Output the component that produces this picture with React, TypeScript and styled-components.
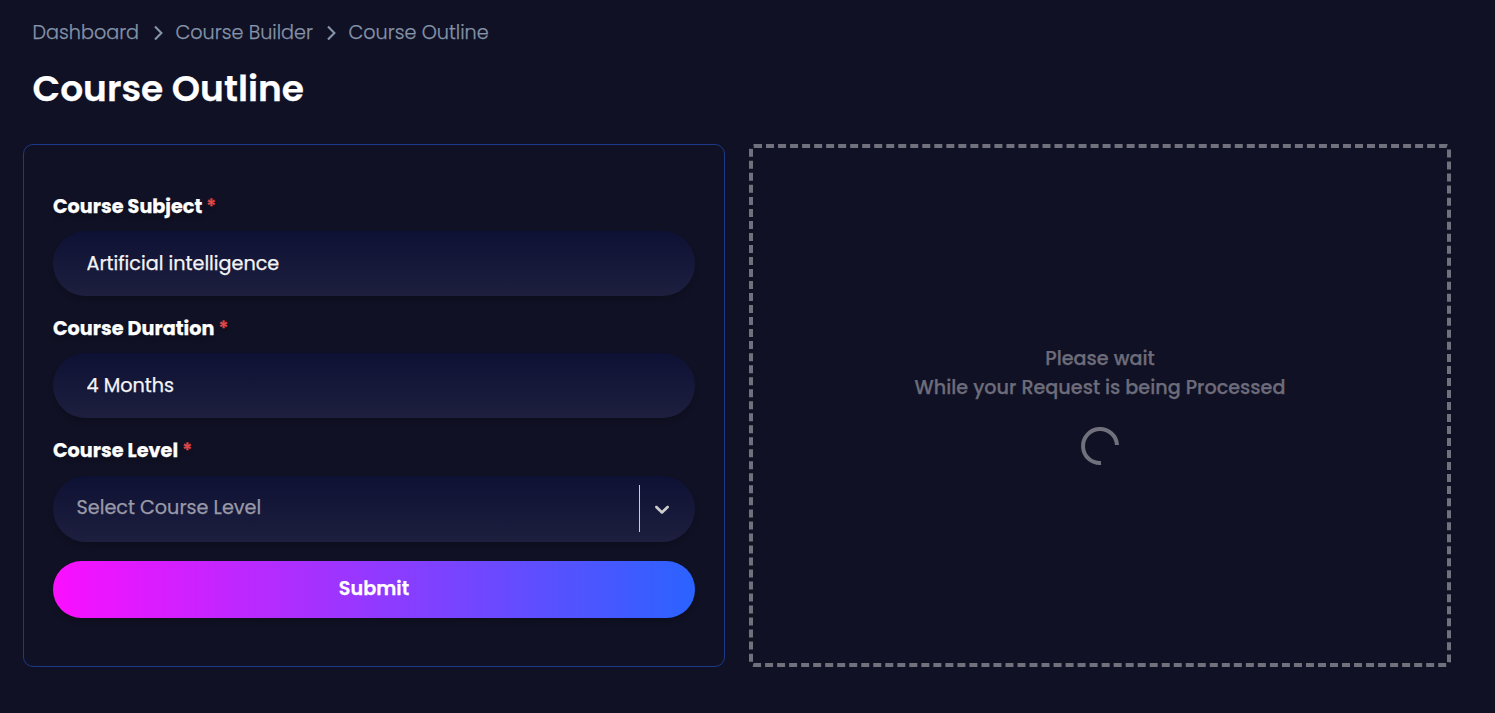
import React from "react";
import styled, { createGlobalStyle } from "styled-components";

const GlobalStyle = createGlobalStyle`
  *, *::before, *::after { box-sizing: border-box; }
  html, body { margin: 0; background: #101124; }
  body {
    font-family: Poppins, Inter, "Open Sans", sans-serif;
    color: #fff;
    -webkit-text-stroke: 0.25px currentColor;
  }
  input, button { font: inherit; }
`;

const Page = styled.main`
  min-height: 713px;
  padding: 17px 44px 46px 23px;
`;

const Breadcrumb = styled.nav`
  display: flex;
  align-items: center;
  height: 30px;
  padding-left: 9.5px;
  color: #8594aa;
  font-size: 19.2px;
  font-weight: 300;
`;

const Crumb = styled.span<{ $width: number }>`
  width: ${(p) => p.$width}px;
  white-space: nowrap;
`;

const CrumbArrow = styled.svg`
  width: 10px;
  height: 16px;
  margin: 2px 13px 0;
  flex: none;
`;

const Title = styled.h1`
  margin: 16px 0 0;
  padding-left: 9.5px;
  height: 52px;
  line-height: 52px;
  font-size: 36px;
  font-weight: 600;
`;

const Columns = styled.div`
  display: grid;
  grid-template-columns: 702px 702px;
  gap: 24px;
  height: 523px;
  margin-top: 29px;
`;

const FormPanel = styled.form`
  border: 1px solid #1d3a8a;
  border-radius: 10px;
  padding: 47px 29px 0;
`;

const Field = styled.div`
  margin-bottom: 18px;
`;

const Label = styled.label`
  display: block;
  height: 39px;
  line-height: 29px;
  font-size: 19.2px;
  font-weight: 700;
  text-shadow: 0 4px 4px rgba(0, 0, 0, 0.2);
`;

const Required = styled.span`
  color: #e04848;
  font-weight: 600;
`;

const pill = `
  width: 100%;
  border: 0;
  border-radius: 33px;
  background: linear-gradient(180deg, #0d1133 0%, #1e1f3f 100%);
  box-shadow: 0 4px 5px rgba(0, 0, 0, 0.17);
`;

const TextInput = styled.input`
  ${pill}
  display: block;
  height: 65px;
  padding: 0 33.5px;
  color: #f4f4f6;
  font-size: 19.2px;
  outline: none;
`;

const Select = styled.div`
  ${pill}
  display: flex;
  align-items: center;
  height: 66px;
  margin-top: 1px;
  padding: 0 21px 0 23.5px;
`;

const Placeholder = styled.span`
  flex: 1;
  color: #9a9aa8;
  font-size: 19.2px;
  padding-bottom: 3px;
`;

const Separator = styled.span`
  width: 1px;
  height: 47px;
  margin-bottom: 1px;
  background: #ccc;
`;

const Chevron = styled.svg`
  width: 24px;
  height: 24px;
  margin: 0 0 1px 10px;
`;

const Submit = styled.button`
  display: block;
  width: 100%;
  height: 57px;
  margin-top: 19px;
  padding: 0 0 2px;
  border: 0;
  border-radius: 29px;
  color: #fff;
  font-size: 19.2px;
  font-weight: 600;
  background: linear-gradient(90deg, #fb0fff 0%, #2a63ff 100%);
  box-shadow: 0 4px 5px rgba(0, 0, 0, 0.2);
`;

const ResultPanel = styled.section`
  display: flex;
  flex-direction: column;
  align-items: center;
  border: 4px dashed #71717d;
  border-radius: 5px;
  padding-top: 196px;
  color: #6d6c7a;
`;

const Message = styled.p`
  margin: 0;
  line-height: 29px;
  font-size: 19.2px;
  font-weight: 500;
`;

const Spinner = styled.svg`
  width: 40px;
  height: 40px;
  margin-top: 24px;
`;

const Arrow = () => (
  <CrumbArrow viewBox="0 0 10 16" fill="none" stroke="currentColor" strokeWidth="2.1">
    <path d="M2 1.4 8.4 8 2 14.6" />
  </CrumbArrow>
);

export default function App() {
  return (
    <>
      <GlobalStyle />
      <Page>
        <Breadcrumb>
          <Crumb $width={107}>Dashboard</Crumb>
          <Arrow />
          <Crumb $width={137}>Course Builder</Crumb>
          <Arrow />
          <Crumb $width={142}>Course Outline</Crumb>
        </Breadcrumb>
        <Title>Course Outline</Title>
        <Columns>
          <FormPanel>
            <Field>
              <Label>Course Subject <Required>*</Required></Label>
              <TextInput defaultValue="Artificial intelligence" />
            </Field>
            <Field>
              <Label>Course Duration <Required>*</Required></Label>
              <TextInput defaultValue="4 Months" />
            </Field>
            <Label>Course Level <Required>*</Required></Label>
            <Select>
              <Placeholder>Select Course Level</Placeholder>
              <Separator />
              <Chevron viewBox="0 0 20 20" fill="#ccc">
                <path d="M4.516 7.548c0.436-0.446 1.043-0.481 1.576 0l3.908 3.747 3.908-3.747c0.533-0.481 1.141-0.446 1.574 0 0.436 0.445 0.408 1.197 0 1.615-0.406 0.418-4.695 4.502-4.695 4.502-0.217 0.223-0.502 0.335-0.787 0.335s-0.57-0.112-0.789-0.335c0 0-4.287-4.084-4.695-4.502s-0.436-1.17 0-1.615z" />
              </Chevron>
            </Select>
            <Submit type="button">Submit</Submit>
          </FormPanel>
          <ResultPanel>
            <Message>Please wait</Message>
            <Message>While your Request is being Processed</Message>
            <Spinner viewBox="0 0 40 40" fill="none" stroke="#71717d" strokeWidth="4">
              <path d="M37 19A17 17 0 1 0 21 37" />
            </Spinner>
          </ResultPanel>
        </Columns>
      </Page>
    </>
  );
}
